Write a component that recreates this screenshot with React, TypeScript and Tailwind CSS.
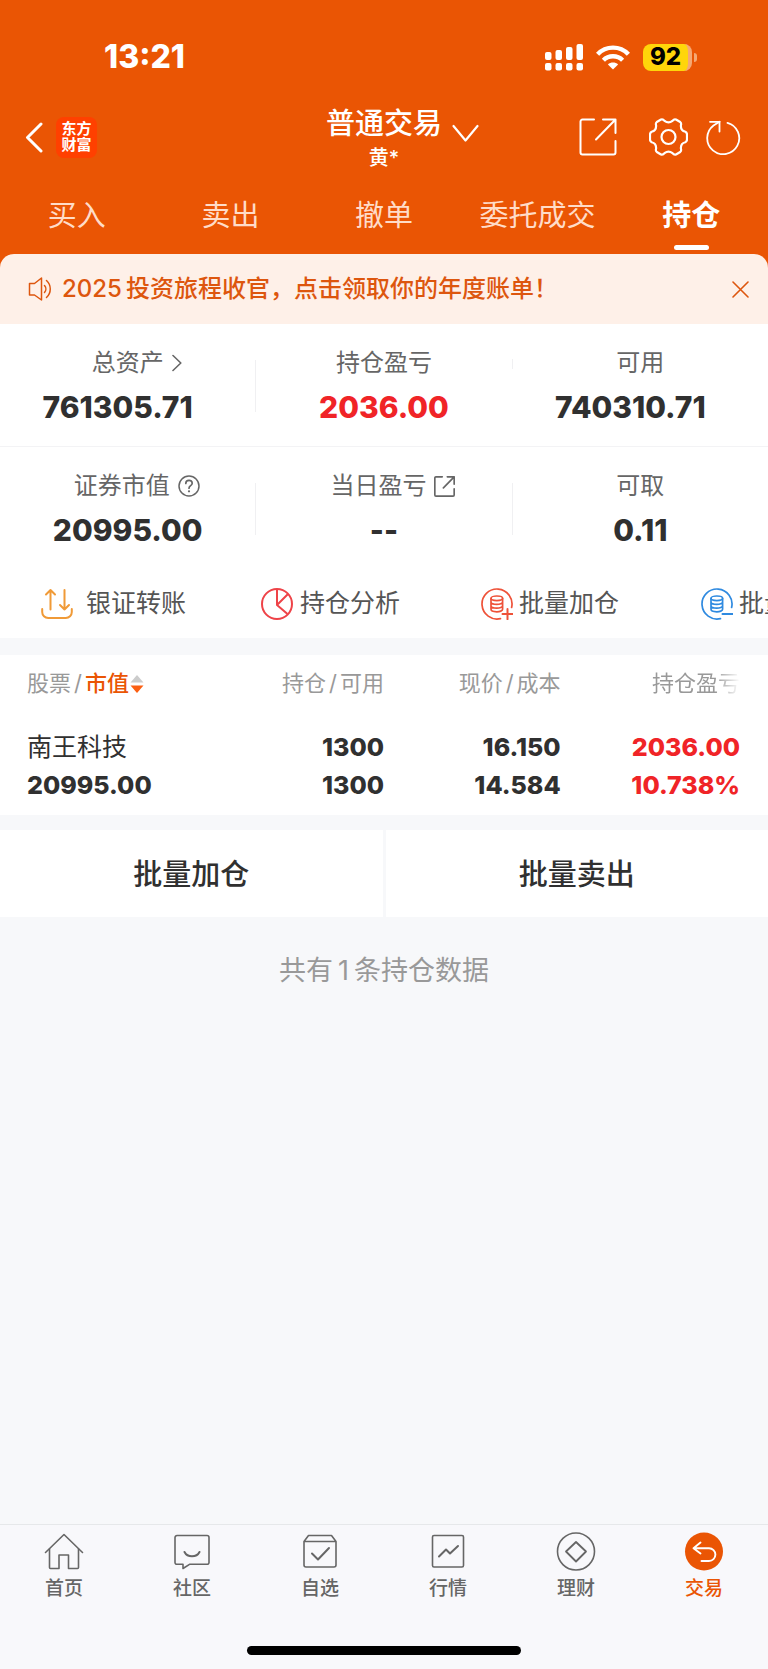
import type { ReactNode } from 'react';

const tabs = ['买入', '卖出', '撤单', '委托成交', '持仓'];

function SignalIcon() {
  return (
    <svg width="38" height="27" viewBox="0 0 38 27" fill="currentColor" aria-hidden="true">
      {[0, 10.5, 21, 31.5].map((x, i) => (
        <g key={x}>
          <rect x={x} y={[8, 6, 3, 0][i]} width="6.5" height={[8, 10, 13, 16][i]} rx="2" />
          <rect x={x} y="19" width="6.5" height="7.5" rx="2" />
        </g>
      ))}
    </svg>
  );
}

function WifiIcon() {
  return (
    <svg width="34" height="25" viewBox="0 0 34 25" aria-hidden="true">
      <g fill="none" stroke="currentColor" strokeWidth="4.4">
        <path d="M1.600 9.200C10 .4 24 .4 32.400 9.200" />
        <path d="M7.400 15.200C12.600 9.900 21.400 9.900 26.600 15.200" />
      </g>
      <path d="M17 24.600 11.900 19.500C14.600 16.900 19.400 16.900 22.100 19.500Z" fill="currentColor" />
    </svg>
  );
}

function ShareIcon({ size, stroke }: { size: number; stroke: number }) {
  return (
    <svg width={size} height={size} viewBox="0 0 38 38" fill="none" stroke="currentColor" strokeWidth={stroke} strokeLinecap="round" strokeLinejoin="round" aria-hidden="true">
      <path d="M15 1.500H3.500a2 2 0 0 0-2 2v31a2 2 0 0 0 2 2h31a2 2 0 0 0 2-2V23" />
      <path d="M24 1.500h12.500V15M36.500 1.500 17 21.500" />
    </svg>
  );
}

function GearIcon() {
  return (
    <svg width="39" height="38" viewBox="0 0 39 38" fill="none" stroke="currentColor" strokeWidth="2.200" strokeLinejoin="round" aria-hidden="true">
      <path d="M12 1.500 Q14 .8 15.500 2.800 Q19.500 5.800 23.500 2.800 Q25 .8 27 1.500 L31.200 4 Q32.600 5.200 31.900 7.500 Q31.700 12.600 36.300 13.700 Q38 14.500 38 16.500 V21.500 Q38 23.500 36.300 24.300 Q31.700 25.400 31.900 30.500 Q32.600 32.800 31.200 34 L27 36.500 Q25 37.200 23.500 35.200 Q19.500 32.200 15.500 35.200 Q14 37.200 12 36.500 L7.800 34 Q6.400 32.800 7.100 30.500 Q7.300 25.400 2.700 24.300 Q1 23.500 1 21.500 V16.500 Q1 14.500 2.700 13.700 Q7.300 12.600 7.100 7.500 Q6.400 5.200 7.800 4Z" />
      <circle cx="19.500" cy="19" r="7" />
    </svg>
  );
}

function RefreshIcon() {
  return (
    <svg width="35" height="35" viewBox="0 0 35 35" fill="none" stroke="currentColor" strokeWidth="1.800" strokeLinecap="round" aria-hidden="true">
      <path d="M21.500 2.800A16 16 0 1 1 7.500 5.500L13.500 1.800" />
      <path d="M4 1.800H13.500V11.500" />
    </svg>
  );
}

function SpeakerIcon() {
  return (
    <svg width="24" height="24" viewBox="0 0 24 24" fill="none" stroke="currentColor" strokeWidth="1.500" strokeLinecap="round" strokeLinejoin="round" className="shrink-0" aria-hidden="true">
      <path d="M1.500 6.500h5l7-5.500v22l-7-5H1.500Z" />
      <path d="M16.500 8.500c1.800 2 1.800 5 0 7M18.500 3.500c5 4.500 5 12.500 0 17" />
    </svg>
  );
}

function TransferIcon() {
  return (
    <svg width="32" height="32" viewBox="0 0 32 32" fill="none" stroke="#f09a37" strokeWidth="2" strokeLinecap="round" strokeLinejoin="round" aria-hidden="true">
      <path d="M1.200 21v3a6 6 0 0 0 6 6h17.600a6 6 0 0 0 6-6v-3" />
      <path d="M9.500 21.500V2M5 6.500 9.500 2 14 6.500" />
      <path d="M23.500 2v19.500M19 17l4.500 4.500L28 17" />
    </svg>
  );
}

function PieIcon() {
  return (
    <svg width="32" height="32" viewBox="0 0 32 32" fill="none" stroke="#ee4348" strokeWidth="2" strokeLinejoin="round" aria-hidden="true">
      <circle cx="16" cy="16" r="15" />
      <path d="M16 1v16L26.500 26M16 17 27 6" />
    </svg>
  );
}

function CoinsIcon({ color, minus }: { color: string; minus?: boolean }) {
  return (
    <svg width="32" height="32" viewBox="0 0 32 32" fill="none" stroke={color} strokeWidth="1.700" strokeLinecap="round" aria-hidden="true">
      <path d="M19.500 30.600A15 15 0 1 1 30.600 19.500" />
      <ellipse cx="15.800" cy="10.300" rx="5.800" ry="2.300" />
      <path d="M10 10.500v10.800c0 3.300 11.600 3.300 11.600 0V10.500M10 14c0 3.100 11.600 3.100 11.600 0M10 17.700c0 3.100 11.600 3.100 11.600 0" />
      <path d={minus ? 'M21.500 26h10' : 'M21.500 26h10M26.500 21v10.200'} strokeWidth="2" />
    </svg>
  );
}

function StatLabel({ children, icon }: { children: ReactNode; icon?: ReactNode }) {
  return (
    <div className={icon ? 'flex h-9 items-center justify-center gap-2 pl-[18px]' : 'flex h-9 items-center justify-center'}>
      <span className="text-2xl leading-9 text-[#666]">{children}</span>
      {icon}
    </div>
  );
}

function Stat({ label, icon, value, red, wide }: { label: string; icon?: ReactNode; value: string; red?: boolean; wide?: boolean }) {
  return (
    <div className="flex min-w-0 flex-1 flex-col gap-[6px] text-[#666]">
      <StatLabel icon={icon}>{label}</StatLabel>
      <p className={`text-center text-[30px] leading-10 font-extrabold ${red ? 'text-[#f02427]' : 'text-[#303030]'} ${wide ? 'pr-5' : ''}`}>{value}</p>
    </div>
  );
}

const navStroke = {
  width: 40,
  height: 40,
  viewBox: '0 0 40 40',
  fill: 'none',
  stroke: 'currentColor',
  strokeWidth: 1.6,
  strokeLinecap: 'round' as const,
  strokeLinejoin: 'round' as const,
  'aria-hidden': true,
};

const navItems: { label: string; active?: boolean; icon: ReactNode }[] = [
  {
    label: '首页',
    icon: (
      <svg {...navStroke}>
        <path d="M1.500 21.500 20 3.500 38.500 21.500" />
        <path d="M5.500 18v18.500a1 1 0 0 0 1 1H15V24h9.500v13.500h9a1 1 0 0 0 1-1V18" />
      </svg>
    ),
  },
  {
    label: '社区',
    icon: (
      <svg {...navStroke}>
        <path d="M5 4.500h30a2 2 0 0 1 2 2v25a1.800 1.800 0 0 1-2 1.800H17.500L11 37.500v-4.200H5a1.800 1.800 0 0 1-2-1.800v-25a2 2 0 0 1 2-2Z" />
        <path d="M12.500 21c3 5.800 12 5.800 15 0" strokeWidth="2" />
      </svg>
    ),
  },
  {
    label: '自选',
    icon: (
      <svg {...navStroke}>
        <path d="M4 10.500 8.500 4.500h23L36 10.500v23.500a2 2 0 0 1-2 2H6a2 2 0 0 1-2-2ZM4.500 10.500h31" />
        <path d="M12 22.500 18 28.500 29 17" strokeWidth="2" />
      </svg>
    ),
  },
  {
    label: '行情',
    icon: (
      <svg {...navStroke}>
        <rect x="4.500" y="4.500" width="31" height="31.500" rx="1.500" />
        <path d="M11 25.500 18 18.500 22 22.500 30 15" strokeWidth="2" />
      </svg>
    ),
  },
  {
    label: '理财',
    icon: (
      <svg {...navStroke}>
        <circle cx="20" cy="20.500" r="18.500" />
        <path d="M20 11 30 20.500 20 30.500 10 20.500Z" strokeWidth="1.800" />
      </svg>
    ),
  },
  {
    label: '交易',
    active: true,
    icon: (
      <svg {...navStroke}>
        <circle cx="20" cy="20.500" r="19" fill="#ea5504" stroke="none" />
        <path d="M16.500 11.500 9.500 17.200 16.500 22.500M9.500 17.200H25a6.200 6.200 0 0 1 0 12.800h-7.500" stroke="#fff" strokeWidth="1.900" />
      </svg>
    ),
  },
];

export default function App() {
  return (
    <div className="flex min-h-screen flex-col bg-[#f7f8fa] font-['Inter','Noto_Sans_CJK_SC',sans-serif]">
      <header className="bg-[#ea5504] text-white">
        <div className="flex h-[100px] items-center justify-between pt-[14px] pr-[71px] pl-[104px]">
          <time className="text-[32px] leading-9 font-extrabold">13:21</time>
          <div className="flex items-center gap-[13px]">
            <SignalIcon />
            <WifiIcon />
            <div className="flex items-center gap-[2px]">
              <span className="flex h-[27px] w-[49px] items-center justify-center rounded-[8px] border-r-4 border-[#f5a873] bg-[#ffd60a] text-2xl leading-none font-extrabold text-black">92</span>
              <span className="h-[9px] w-[3px] rounded-r-full bg-[#f5a873]" />
            </div>
          </div>
        </div>

        <div className="grid h-[74px] grid-cols-[1fr_auto_1fr] items-center">
          <div className="flex items-center gap-[13px] pl-[25px]">
            <button type="button" aria-label="返回">
              <svg width="18" height="31" viewBox="0 0 18 31" fill="none" stroke="currentColor" strokeWidth="3" strokeLinecap="round" strokeLinejoin="round" aria-hidden="true">
                <path d="M16 2 2.500 15.500 16 29" />
              </svg>
            </button>
            <div className="flex size-[41px] flex-col items-center justify-center rounded-[8px] bg-[#ff4000] text-[15px] leading-4 font-bold">
              <span>东方</span>
              <span>财富</span>
            </div>
          </div>
          <div className="flex flex-col items-center pt-[6px]">
            <h1 className="text-[29px] leading-9 font-medium">普通交易</h1>
            <p className="text-xl leading-8 font-medium">黄*</p>
          </div>
          <div className="flex items-center pr-[27px] pl-[10px]">
            <button type="button" aria-label="切换账户" className="mr-auto">
              <svg width="27" height="27" viewBox="0 0 27 27" fill="none" stroke="currentColor" strokeWidth="2.200" strokeLinecap="round" strokeLinejoin="round" aria-hidden="true">
                <path d="M1.500 2 13.500 16.500 25.500 2" />
              </svg>
            </button>
            <button type="button" aria-label="分享" className="mr-8">
              <ShareIcon size={38} stroke={2} />
            </button>
            <button type="button" aria-label="设置" className="mr-[18px]">
              <GearIcon />
            </button>
            <button type="button" aria-label="刷新">
              <RefreshIcon />
            </button>
          </div>
        </div>

        <nav className="grid grid-cols-5">
          {tabs.map((tab) => {
            const active = tab === '持仓';
            return (
              <a key={tab} href="#" className="flex flex-col items-center gap-2 pt-5 pb-1 text-[29px] leading-[43px]">
                <span className={active ? 'font-bold text-white' : 'text-[#ffdcc8]'}>{tab}</span>
                <span className={active ? 'h-[5px] w-[35px] rounded-full bg-white' : 'h-[5px]'} />
              </a>
            );
          })}
        </nav>

        <div className="flex h-[70px] items-center gap-[10px] rounded-t-[14px] bg-[#fef0e8] pr-[19px] pl-7 text-[#dd560e]">
          <SpeakerIcon />
          <p className="flex-1 text-2xl font-medium">
            <span className="mr-1">2025</span>投资旅程收官，点击领取你的年度账单！
          </p>
          <button type="button" aria-label="关闭">
            <svg width="17" height="17" viewBox="0 0 17 17" fill="none" stroke="currentColor" strokeWidth="1.600" strokeLinecap="round" aria-hidden="true">
              <path d="M1 1 16 16M16 1 1 16" />
            </svg>
          </button>
        </div>
      </header>

      <main className="flex-1">
        <section className="bg-white">
          <div className="flex border-b border-[#f3f3f5] pt-[21px] pb-[19px]">
            <Stat
              label="总资产"
              value="761305.71"
              wide
              icon={
                <svg width="10" height="18" viewBox="0 0 10 18" fill="none" stroke="currentColor" strokeWidth="1.600" strokeLinecap="round" strokeLinejoin="round" aria-hidden="true">
                  <path d="M1 1.500 8.800 9 1 16.500" />
                </svg>
              }
            />
            <span className="h-[52px] w-px self-center bg-[#f0f0f2]" />
            <Stat label="持仓盈亏" value="2036.00" red />
            <span className="mt-[14px] h-[10px] w-px bg-[#f0f0f2]" />
            <Stat label="可用" value="740310.71" wide />
          </div>
          <div className="flex pt-[21px] pb-[19px]">
            <Stat
              label="证券市值"
              value="20995.00"
              icon={
                <svg width="22" height="22" viewBox="0 0 22 22" fill="none" stroke="currentColor" strokeWidth="1.500" strokeLinecap="round" aria-hidden="true">
                  <circle cx="11" cy="11" r="10" />
                  <path d="M7.800 8.500c0-4.200 6.400-4.200 6.400-.3 0 2.500-3.200 2.500-3.200 5" strokeWidth="1.700" />
                  <circle cx="11" cy="16.300" r="1.100" fill="currentColor" stroke="none" />
                </svg>
              }
            />
            <span className="h-[52px] w-px self-center bg-[#f0f0f2]" />
            <Stat label="当日盈亏" value="--" icon={<ShareIcon size={21} stroke={3} />} />
            <span className="h-[52px] w-px self-center bg-[#f0f0f2]" />
            <Stat label="可取" value="0.11" />
          </div>

          <div className="flex h-[69px] items-center overflow-hidden pl-[41px] text-[25px] text-[#555]">
            <button type="button" className="flex w-[220px] shrink-0 items-center gap-[13px]">
              <TransferIcon />
              银证转账
            </button>
            <button type="button" className="flex w-[220px] shrink-0 items-center gap-[7px]">
              <PieIcon />
              持仓分析
            </button>
            <button type="button" className="flex w-[220px] shrink-0 items-center gap-[6px]">
              <CoinsIcon color="#ee5239" />
              批量加仓
            </button>
            <button type="button" className="flex w-[220px] shrink-0 items-center gap-[6px]">
              <CoinsIcon color="#2f8ae0" minus />
              批量减仓
            </button>
          </div>
        </section>

        <section className="mt-[17px] bg-white">
          <table className="w-full table-fixed">
            <thead>
              <tr className="h-[57px] text-right text-[22px] text-[#999]">
                <th className="w-[28%] pl-[27px] text-left font-normal">
                  <button type="button" className="flex items-center">
                    股票<span className="mx-[3px]">/</span>
                    <span className="font-medium text-[#ea5504]">市值</span>
                    <svg width="14" height="20" viewBox="0 0 14 20" className="ml-px" aria-hidden="true">
                      <path d="M7 1 13.500 8.500H.5Z" fill="#ccc" />
                      <path d="M7 19 .5 11.500h13Z" fill="#fb5f12" />
                    </svg>
                  </button>
                </th>
                <th className="w-[22%] font-normal">
                  持仓<span className="mx-[3px]">/</span>可用
                </th>
                <th className="w-[23%] font-normal">
                  现价<span className="mx-[3px]">/</span>成本
                </th>
                <th className="w-[27%] pr-7 font-normal">
                  <span className="[mask-image:linear-gradient(to_right,#000_72%,transparent)]">持仓盈亏</span>
                </th>
              </tr>
            </thead>
            <tbody>
              <tr className="text-right text-[25px] leading-[38px] font-extrabold text-[#303030]">
                <td className="pt-4 pb-[11px] pl-[27px] text-left">
                  <div className="font-normal">南王科技</div>
                  <div>20995.00</div>
                </td>
                <td className="pt-4 pb-[11px]">
                  <div>1300</div>
                  <div>1300</div>
                </td>
                <td className="pt-4 pb-[11px]">
                  <div>16.150</div>
                  <div>14.584</div>
                </td>
                <td className="pt-4 pr-7 pb-[11px] text-[#f02427]">
                  <div>2036.00</div>
                  <div>10.738%</div>
                </td>
              </tr>
            </tbody>
          </table>
        </section>

        <div className="mt-[15px] grid grid-cols-2 gap-[3px] text-[29px] font-medium text-[#303030]">
          <button type="button" className="h-[87px] bg-white pt-[2px]">批量加仓</button>
          <button type="button" className="h-[87px] bg-white pt-[2px]">批量卖出</button>
        </div>
        <p className="pt-[33px] text-center text-[27px] leading-[42px] text-[#999]">
          共有<span className="mx-[5px]">1</span>条持仓数据
        </p>
      </main>

      <footer className="border-t border-[#e6e8ea] bg-[#f8f8fb]">
        <nav className="grid grid-cols-6">
          {navItems.map((item) => (
            <a
              key={item.label}
              href="#"
              className={`flex flex-col items-center gap-1 pt-[6px] text-[19px] leading-7 font-medium ${item.active ? 'text-[#ea5504]' : 'text-[#666]'}`}
            >
              {item.icon}
              {item.label}
            </a>
          ))}
        </nav>
        <div className="flex justify-center pt-[43px] pb-[14px]">
          <span className="h-[9px] w-[274px] rounded-full bg-black" />
        </div>
      </footer>
    </div>
  );
}
